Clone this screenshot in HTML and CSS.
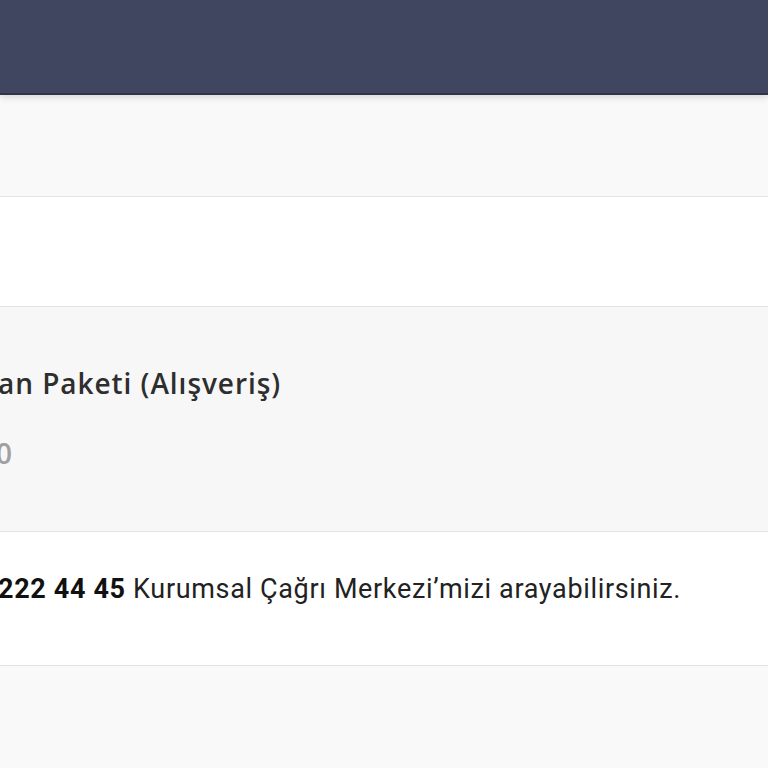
FILE: index.html
```html
<!DOCTYPE html>
<html lang="tr">
<head>
  <meta charset="UTF-8">
  <meta name="viewport" content="width=device-width, initial-scale=1">
  <title>Paket Detayı</title>
  <link rel="stylesheet" href="styles.css">
</head>
<body>

<div class="header"></div>

<div class="band band-top"></div>

<div class="band band-white"></div>

<div class="band band-package">
  <h2 class="package-title">an Paketi (Alışveriş)</h2>
  <div class="package-price">0</div>
</div>

<div class="band band-info">
  <p class="info-text"><b>222 44 45</b> Kurumsal Çağrı Merkezi’mizi arayabilirsiniz.</p>
</div>

<div class="band band-bottom"></div>

</body>
</html>
```

FILE: styles.css
```css
body {
  margin: 0;
  padding: 0;
  background: #f9f9f9;
  font-family: "Open Sans", Arial, sans-serif;
  color: #333;
  overflow: hidden;
}
.header {
  height: 93px;
  background: #40465f;
  border-bottom: 2px solid #2f3446;
  box-shadow: 0 3px 6px rgba(0,0,0,0.12);
  position: relative;
  z-index: 1;
}
.band {
  border-bottom: 1px solid #e3e3e3;
  overflow: hidden;
}
.band-top {
  height: 101px;
  background: #f9f9f9;
}
.band-white {
  height: 109px;
  background: #ffffff;
}
.band-package {
  height: 225px;
  background: #f7f7f7;
  box-sizing: border-box;
  padding-top: 58px;
}
.package-title {
  margin: 0 0 0 -2px;
  font-size: 28px;
  font-weight: 600;
  letter-spacing: 0.95px;
  color: #2e2e2e;
  line-height: 36px;
}
.package-price {
  margin: 34px 0 0 -4px;
  font-size: 28px;
  font-weight: 600;
  color: #a0a0a0;
  line-height: 36px;
}
.band-info {
  height: 134px;
  background: #ffffff;
  box-sizing: border-box;
  padding-top: 41px;
}
.info-text {
  margin: 0 0 0 -2px;
  font-family: Roboto, Arial, sans-serif;
  font-size: 27px;
  letter-spacing: 0.65px;
  line-height: 32px;
  color: #222;
}
.info-text b {
  color: #111;
}
.band-bottom {
  height: 120px;
  background: #f9f9f9;
  border-bottom: none;
}
```
